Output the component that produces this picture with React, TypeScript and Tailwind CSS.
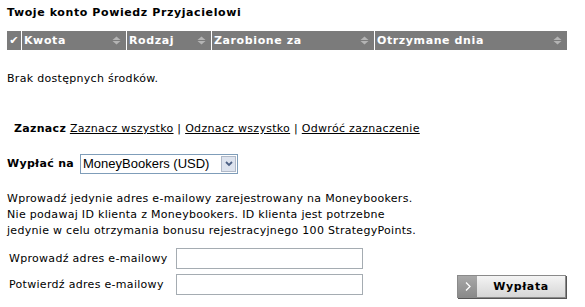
import React from "react";

const cols = [
  { label: "Kwota", w: "w-[105px]" },
  { label: "Rodzaj", w: "w-[85px]" },
  { label: "Zarobione za", w: "w-[163px]" },
  { label: "Otrzymane dnia", w: "flex-1" },
];

function SortArrows() {
  return (
    <svg width="9" height="9" viewBox="0 0 9 9" className="shrink-0">
      <path d="M4.5 0.5 L8.5 4 L0.5 4 Z" fill="#b4b4b4" />
      <path d="M0.5 5 L8.5 5 L4.5 8.5 Z" fill="#b4b4b4" />
    </svg>
  );
}

export default function App() {
  return (
    <div className="w-[585px] h-[307px] bg-white text-black text-[11px] leading-[16px] tracking-[0.3px] font-['DejaVu_Sans','Verdana',sans-serif] overflow-hidden">
      <div className="px-[7px] pt-[5px]">
        <h1 className="font-bold text-[11px] leading-[16px] tracking-[0.6px]">Twoje konto Powiedz Przyjacielowi</h1>

        {/* table header */}
        <div className="mt-[10px] flex h-[19px] w-[560px] bg-[#7b7b7b] text-white font-bold">
          <div className="w-[15px] flex items-center justify-center border-r border-white text-[11px]">✔</div>
          {cols.map((c, i) => (
            <div
              key={c.label}
              className={`${c.w} flex items-center justify-between pl-[2px] pr-[5px] ${i < cols.length - 1 ? "border-r border-white" : ""}`}
            >
              <span className="tracking-[0.6px]">{c.label}</span>
              <SortArrows />
            </div>
          ))}
        </div>

        <p className="mt-[21px]">Brak dostępnych środków.</p>

        <p className="mt-[34px] pl-[7px]">
          <span className="font-bold">Zaznacz</span>{" "}
          <span className="underline">Zaznacz wszystko</span> |{" "}
          <span className="underline">Odznacz wszystko</span> |{" "}
          <span className="underline">Odwróć zaznaczenie</span>
        </p>

        <div className="mt-[17px] flex items-center">
          <span className="font-bold w-[73px]">Wypłać na</span>
          <div className="flex h-[20px] w-[158px] items-stretch border border-[#7f9db9] bg-white">
            <span className="flex-1 pl-[2px] text-[13px] leading-[18px] tracking-normal font-['Liberation_Sans','Arial',sans-serif]">
              MoneyBookers (USD)
            </span>
            <span className="m-[1px] flex w-[15px] items-center justify-center border border-[#b0b9c8] bg-[#dde3ee]">
              <svg width="8" height="6" viewBox="0 0 8 6">
                <path d="M1 1 L4 4 L7 1" stroke="#4d6185" strokeWidth="1.8" fill="none" />
              </svg>
            </span>
          </div>
        </div>

        <p className="mt-[17px]">
          Wprowadź jedynie adres e-mailowy zarejestrowany na Moneybookers.
          <br />
          Nie podawaj ID klienta z Moneybookers. ID klienta jest potrzebne
          <br />
          jedynie w celu otrzymania bonusu rejestracyjnego 100 StrategyPoints.
        </p>

        <div className="mt-[9px] flex items-end">
          <div className="flex flex-col gap-[5px]">
            <div className="flex items-center">
              <span className="w-[169px] pl-[2px]">Wprowadź adres e-mailowy</span>
              <div className="h-[21px] w-[187px] border border-[#a5acb2] bg-white" />
            </div>
            <div className="flex items-center">
              <span className="w-[169px] pl-[2px]">Potwierdź adres e-mailowy</span>
              <div className="h-[21px] w-[187px] border border-[#a5acb2] bg-white" />
            </div>
          </div>
          <div className="ml-[94px] mb-[-3px] flex h-[23px] w-[109px] border border-[#8a8a8a] bg-gradient-to-b from-[#f4f4f4] to-[#d6d6d6] shadow-[1px_1px_0_#555]">
            <span className="flex w-[19px] items-center justify-center bg-gradient-to-b from-[#a8a8a8] to-[#8a8a8a] text-white">
              <svg width="6" height="9" viewBox="0 0 6 9">
                <path d="M1 0.5 L5 4.5 L1 8.5" stroke="#fff" strokeWidth="1.3" fill="none" />
              </svg>
            </span>
            <span className="flex-1 text-center font-bold leading-[21px] tracking-[0.6px]">Wypłata</span>
          </div>
        </div>
      </div>
    </div>
  );
}
